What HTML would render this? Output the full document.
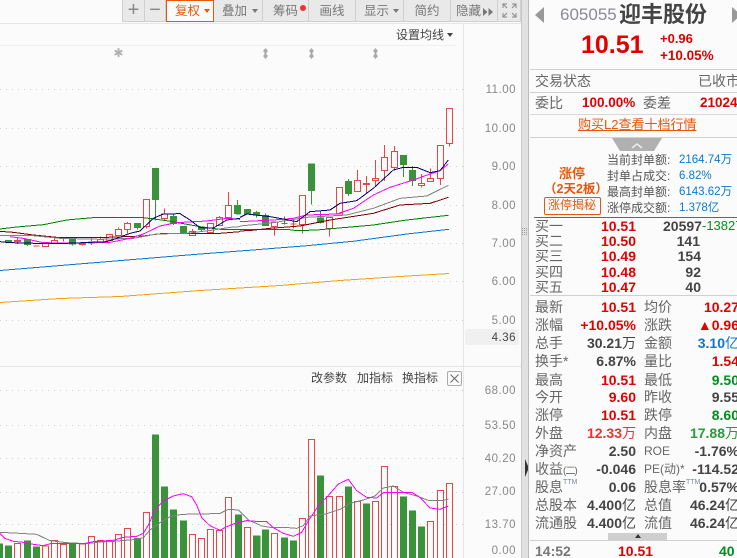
<!DOCTYPE html>
<html><head><meta charset="utf-8">
<style>
html,body{margin:0;padding:0;width:737px;height:558px;overflow:hidden;background:#fbfbfb}
body{position:relative;font-family:"Liberation Sans","WenQuanYi Zen Hei","Noto Sans CJK SC",sans-serif;color:#555}
.a{position:absolute}
.t{position:absolute;white-space:nowrap;line-height:14px;font-size:14px}
.b{font-weight:bold}
.r{color:#e00000}.g{color:#008f1f}.d{color:#444}.bl{color:#0a78d0}.o{color:#e8560a}
.l{color:#666}
.n{font-weight:normal}
.ax{position:absolute;white-space:nowrap;font-size:11.5px;line-height:12px;color:#888;letter-spacing:.5px;right:221px}
.tb{position:absolute;top:0;height:21px;background:#e9e9e9;border-right:1px solid #cfcfcf;border-bottom:1px solid #cfcfcf;font-size:12.5px;line-height:23px;text-align:center;color:#777;box-sizing:content-box}
.s{position:absolute;white-space:nowrap;font-size:12px;line-height:12px;color:#555}
.v{position:absolute;white-space:nowrap;font-size:11.5px;line-height:12px;color:#0a78d0;left:679px}
.R{right:101px}
.R2{right:-2px}
polyline{shape-rendering:crispEdges}
</style></head><body>

<!-- toolbar -->
<div class="a" style="left:122px;top:0;width:1px;height:22px;background:#cfcfcf"></div>
<div class="tb" style="left:123px;width:21px;font-size:20px;line-height:20px;color:#888">+</div>
<div class="tb" style="left:145px;width:20px;font-size:20px;line-height:20px;color:#888">−</div>
<div class="tb" style="left:166px;width:46px;height:20px;background:#fafafa;border:1px solid #e8560a;color:#e8560a;text-align:left;text-indent:8px;line-height:21px">复权</div>
<div class="a" style="left:204px;top:9px;border:3.5px solid transparent;border-top:4px solid #e8560a;border-bottom:0"></div>
<div class="tb" style="left:214px;width:48px;text-align:left;text-indent:8px">叠加</div>
<div class="a" style="left:252px;top:9px;border:3.5px solid transparent;border-top:4px solid #777;border-bottom:0"></div>
<div class="tb" style="left:263px;width:45px;text-align:left;text-indent:10px">筹码</div>
<div class="a" style="left:300px;top:5px;width:6px;height:6px;border-radius:3px;background:#f03030"></div>
<div class="tb" style="left:309px;width:46px">画线</div>
<div class="tb" style="left:356px;width:47px;text-align:left;text-indent:8px">显示</div>
<div class="a" style="left:393px;top:9px;border:3.5px solid transparent;border-top:4px solid #777;border-bottom:0"></div>
<div class="tb" style="left:404px;width:46px">简约</div>
<div class="tb" style="left:451px;width:46px;text-align:left;text-indent:5px">隐藏</div>
<svg class="a" style="left:483px;top:8px" width="12" height="8"><path d="M0 0l4.500 4-4.500 4zM5.500 0l4.500 4-4.500 4z" fill="#777"/></svg>
<div class="tb" style="left:498px;width:22px"></div>
<svg class="a" style="left:502px;top:3px" width="15" height="15" fill="none" stroke="#888"><path d="M1 5V1h4M14 5V1h-4M1 10v4h4M14 10v4h-4M1 1l4 4M14 1l-4 4M1 14l4-4M14 14l-4-4"/></svg>
<div class="a" style="left:0;top:23px;width:522px;height:1px;background:#e6e6e6"></div>
<div class="a" style="left:0;top:45px;width:457px;height:1px;background:#f0f0f0"></div>

<!-- chart frame -->
<div class="a" style="left:463px;top:24px;width:1px;height:534px;background:#e4e4e4"></div>
<div class="a" style="left:0;top:366px;width:522px;height:1px;background:#e4e4e4"></div>
<div class="a" style="left:521px;top:0;width:8px;height:558px;background:#e2e2e2;border-left:1px solid #c8c8c8;border-right:1px solid #bbb;box-sizing:border-box"></div>
<svg class="a" style="left:522px;top:226px" width="6" height="12"><path d="M0.500 2v8M2.500 2v8M4.500 2v8" stroke="#999" stroke-dasharray="1 1"/></svg>
<svg class="a" style="left:524px;top:459px" width="5" height="18"><path d="M1 0L4 7V11L1 18z" fill="#333"/></svg>

<div class="t" style="left:396px;top:28px;font-size:12px;color:#444">设置均线</div>
<div class="a" style="left:447px;top:33px;border:3px solid transparent;border-top:4px solid #444;border-bottom:0"></div>

<svg class="a" style="left:0;top:0" width="464" height="558">
<g stroke="#cfcfcf" stroke-dasharray="1 5" fill="none">
<path d="M0 89.500H463M0 128.500H463M0 166.500H463M0 205.500H463M0 243.500H463M0 281.500H463M0 320.500H463M0 390.500H463M0 425.500H463M0 458.500H463M0 492.500H463M0 524.500H463"/>
</g>
<g fill="#b0b0b0" font-size="12" font-family="Liberation Sans">
<text x="113.500" y="57">✱</text>
</g>
<path d="M265.500 48l2.500 3-1.500 1.500v2l1.500 1.500-2.500 3-2.500-3 1.500-1.500v-2l-1.500-1.500zM311.500 48l2.500 3-1.500 1.500v2l1.500 1.500-2.500 3-2.500-3 1.500-1.500v-2l-1.500-1.500zM375.500 48l2.500 3-1.500 1.500v2l1.500 1.500-2.500 3-2.500-3 1.500-1.500v-2l-1.500-1.500z" fill="#aaa"/>

<!-- candles left: zoom coords 0,130 -->
<g transform="translate(0,130) scale(.33333)" shape-rendering="crispEdges" stroke-width="3">
<path fill="#3a923a" stroke="#3a923a" d="M16 331h18v7h-18zM73 329h18v15h-18zM82 344V348M181 322h18v4h-18zM190 326V335M208 328h18v14h-18zM217 342V347M403 280h18v13h-18zM412 293V298M457 115h19v94h-19zM466 209V272M511 259h18v21h-18zM520 253V285M541 289h18v21h-18zM595 293h18v6h-18zM604 299V303M703 226h18v25h-18zM712 210V226"/>
<path fill="#fbfbfb" stroke="#e84545" d="M43 331h18v4h-18zM52 322V331M52 335V342M100 348h18M127 340h18v9h-18zM154 331h18v10h-18zM163 320V331M238 340h18v3h-18zM247 336V346M265 336h18v3h-18zM274 322V336M274 339V345M292 328h18v10h-18zM301 319V328M319 314h18v18h-18zM346 298h18v18h-18zM355 292V298M373 280h18v18h-18zM382 276V280M382 298V310M430 208h18v82h-18zM439 290V296M484 252h18v13h-18zM493 235V252M493 265V270M568 305h18v11h-18zM577 297V305M622 280h18v27h-18zM649 263h18v24h-18zM658 258V263M676 226h18v37h-18zM685 186V226"/>
</g>

<!-- candles right: zoom coords 240,100 -->
<g transform="translate(240,100) scale(.33333)" shape-rendering="crispEdges" stroke-width="3">
<path fill="#3a923a" stroke="#3a923a" d="M-10 316h10v26h-10zM13 328h18v14h-18zM40 337h18v6h-18zM49 333V352M67 347h18v30h-18zM76 341V347M124 371h18M133 350V373M205 192h19v80h-19zM214 272V314M232 354h18v13h-18zM241 332V370M316 244h19v37h-19zM325 237V288M481 166h19v28h-19zM490 194V231M508 211h19v30h-19zM517 198V258"/>
<path fill="#fbfbfb" stroke="#e84545" d="M94 366h18v14h-18zM103 380V406M90 384h14M151 372h18M160 358V385M178 286h18v88h-18zM187 374V401M259 352h18v34h-18zM268 386V410M289 262h18v80h-18zM343 241h18v33h-18zM352 210V241M370 250h18v4h-18zM379 228V250M379 254V282M397 235h18v7h-18zM406 180V235M406 242V258M424 172h18v39h-18zM433 135V172M433 211V243M454 154h18v49h-18zM463 138V154M463 203V212M535 250h18v7h-18zM544 222V250M544 257V262M562 235h18v9h-18zM571 205V235M592 136h18v100h-18zM601 236V255M619 25h18v105h-18zM628 130V140"/>
</g>

<!-- MA lines -->
<g fill="none" stroke-width="1">
<polyline stroke="#f0a010" points="0,302.500 60,298.500 120,296.500 200,290.500 280,285.500 340,280.500 400,276.500 449,273.500"/>
<polyline stroke="#0878cc" points="0,270.500 132,259.600 200,254 240,251 307,245.700 353,241.300 407,234 449,229.300"/>
</g>
<g transform="translate(0,130) scale(.33333)" fill="none" stroke-width="3">
<polyline stroke="#008000" points="0,297 50,291 130,284 200,270 290,262 430,263 500,272 600,290 660,298 720,298"/>
<polyline stroke="#800000" points="0,304 40,307 100,315 180,323 320,322 430,318 490,310 660,310 720,305"/>
<polyline stroke="#808080" points="0,316 100,317 180,325 300,328 400,325 470,312 560,310 640,300 690,292 720,290"/>
<polyline stroke="#ff00ff" points="30,320 70,325 130,338 200,339 330,337 390,325 430,312 480,288 530,278 620,273 680,265 720,268"/>
<polyline stroke="#000080" points="0,335 30,338 80,339 130,341 200,340 320,335 350,325 390,310 420,303 460,265 490,252 540,251 570,270 600,293 640,294 680,270 720,265"/>
</g>
<g transform="translate(240,100) scale(.33333)" fill="none" stroke-width="3">
<polyline stroke="#008000" points="0,388 140,388 170,392 230,390 400,375 500,360 625,346"/>
<polyline stroke="#800000" points="0,393 35,391 90,385 180,378 270,360 400,340 480,315 570,310 625,292"/>
<polyline stroke="#808080" points="0,378 100,368 200,352 320,345 400,325 480,295 560,288 625,256"/>
<polyline stroke="#ff00ff" points="0,365 100,360 160,355 200,345 290,342 340,325 400,285 450,262 520,240 570,222 600,212 625,192"/>
<polyline stroke="#000080" points="0,352 20,342 90,350 130,357 170,365 210,335 270,330 300,310 350,302 400,265 460,210 490,202 530,202 570,218 600,212 625,180"/>
</g>

<!-- volume left -->
<g transform="translate(0,425) scale(.33333)" shape-rendering="crispEdges" stroke-width="3">
<path fill="#3a923a" stroke="#3a923a" d="M-10 357h18v41h-18zM16 363h18v35h-18zM73 348h18v50h-18zM100 366h18v32h-18zM208 356h18v42h-18zM403 340h18v58h-18zM457 30h19v368h-19zM484 186h19v212h-19zM511 255h19v143h-19zM541 288h19v110h-19zM706 270h19v128h-19zM760 333h20v65h-20z"/>
<path fill="#fbfbfb" stroke="#e84545" d="M43 355h18v45h-18zM127 363h18v37h-18zM154 347h18v53h-18zM181 358h18v42h-18zM238 357h18v43h-18zM265 334h18v66h-18zM292 346h18v54h-18zM319 346h18v54h-18zM346 328h18v72h-18zM373 310h18v90h-18zM430 262h18v138h-18zM568 328h18v72h-18zM595 340h18v60h-18zM622 313h18v87h-18zM649 316h18v84h-18zM676 217h18v183h-18zM733 307h18v93h-18z"/>
</g>
<!-- volume right -->
<g transform="translate(260,360) scale(.33333)" shape-rendering="crispEdges" stroke-width="3">
<path fill="#3a923a" stroke="#3a923a" d="M7 510h19v84h-19zM64 534h18v60h-18zM91 543h18v51h-18zM172 348h19v246h-19zM256 381h19v213h-19zM310 432h19v162h-19zM421 411h19v183h-19zM448 453h19v141h-19zM475 501h19v93h-19z"/>
<path fill="#fbfbfb" stroke="#e84545" d="M34 520h18v76h-18zM118 475h18v121h-18zM145 238h18v358h-18zM199 409h18v187h-18zM229 409h18v187h-18zM283 424h18v172h-18zM337 424h18v172h-18zM364 319h18v277h-18zM394 379h18v217h-18zM502 484h18v112h-18zM532 391h18v205h-18zM559 370h18v226h-18z"/>
</g>
<g transform="translate(0,425) scale(.33333)" fill="none" stroke-width="3">
<polyline stroke="#808080" points="0,322 60,325 110,328 150,347 200,353 260,356 300,351 340,349 400,344 430,338 450,315 480,293 510,275 545,268 610,267 660,265 685,253 715,255 745,285 780,300"/>
<polyline stroke="#ff00ff" points="0,325 15,340 40,349 70,352 100,358 130,362 155,355 190,356 250,356 280,350 340,346 370,337 410,334 430,325 445,300 465,255 490,228 520,213 550,206 575,215 590,240 605,278 630,302 660,316 680,305 700,297 740,287 780,290"/>
</g>
<g transform="translate(260,360) scale(.33333)" fill="none" stroke-width="3">
<polyline stroke="#808080" points="0,497 30,502 85,503 110,505 130,497 150,468 200,461 240,448 270,430 310,420 345,408 370,384 400,378 430,397 470,408 505,421 550,421 565,417"/>
<polyline stroke="#ff00ff" points="0,484 20,485 40,503 70,520 100,529 125,517 150,475 180,430 200,412 235,372 265,358 290,392 320,412 350,414 370,398 410,397 455,397 480,412 510,444 540,448 565,438"/>
</g>
</svg>

<div class="a" style="left:465px;top:329px;width:54px;height:16px;background:#f0f0f0;border-radius:3px"></div>
<div class="ax" style="top:84px">11.00</div>
<div class="ax" style="top:123px">10.00</div>
<div class="ax" style="top:161px">9.00</div>
<div class="ax" style="top:200px">8.00</div>
<div class="ax" style="top:238px">7.00</div>
<div class="ax" style="top:276px">6.00</div>
<div class="ax" style="top:315px">5.00</div>
<div class="ax" style="top:332px;color:#444">4.36</div>
<div class="ax" style="top:385px">68.00</div>
<div class="ax" style="top:420px">53.50</div>
<div class="ax" style="top:453px">40.20</div>
<div class="ax" style="top:486px">27.00</div>
<div class="ax" style="top:519px">13.70</div>
<div class="ax" style="top:545px">0.00</div>

<div class="t" style="left:311px;top:371px;font-size:12px;color:#444">改参数</div>
<div class="t" style="left:357px;top:371px;font-size:12px;color:#444">加指标</div>
<div class="t" style="left:402px;top:371px;font-size:12px;color:#444">换指标</div>
<svg class="a" style="left:447px;top:371px" width="15" height="15" fill="none"><rect x=".5" y=".5" width="14" height="14" rx="1.500" stroke="#aaa"/><path d="M3.500 3.500l8 8M11.500 3.500l-8 8" stroke="#666"/></svg>

<!-- right panel -->
<svg class="a" style="left:535px;top:7px" width="10" height="16"><path d="M9 0V16L0 8z" fill="#999"/></svg>
<svg class="a" style="left:732px;top:7px" width="10" height="16"><path d="M0 0V16L9 8z" fill="#999"/></svg>
<div class="t" style="left:560px;top:6px;font-size:17px;line-height:18px;color:#8a8a96">605055</div>
<div class="t b" style="left:619px;top:2px;font-size:22px;line-height:26px;color:#444;letter-spacing:0">迎丰股份</div>
<div class="t b r" style="left:581px;top:31px;font-size:25px;line-height:28px">10.51</div>
<div class="t b r" style="left:660px;top:32px;font-size:13px">+0.96</div>
<div class="t b r" style="left:660px;top:49px;font-size:13.500px">+10.05%</div>
<div class="a" style="left:530px;top:69px;width:207px;height:1px;background:#d0d0d0"></div>
<div class="t l" style="left:535px;top:74px">交易状态</div>
<div class="t l" style="left:698px;top:74px">已收市</div>
<div class="a" style="left:530px;top:92px;width:207px;height:1px;background:#d0d0d0"></div>
<div class="t l" style="left:535px;top:96px">委比</div>
<div class="t b r" style="left:582px;top:96px;font-size:13.500px">100.00%</div>
<div class="t l" style="left:643px;top:96px">委差</div>
<div class="t b r" style="left:700px;top:96px;font-size:13.500px">21024</div>
<div class="a" style="left:530px;top:114px;width:207px;height:1px;background:#d8d8d8"></div>
<div class="t o" style="left:578px;top:118px;font-size:13px;text-decoration:underline">购买L2查看十档行情</div>
<div class="a" style="left:530px;top:137px;width:207px;height:1px;background:#d0d0d0"></div>
<svg class="a" style="left:612px;top:138px" width="50" height="14"><path d="M0 0H50L42 13H8z" fill="#b0b0b0"/><path d="M20 10l5-4 5 4" fill="none" stroke="#eee" stroke-width="1.500"/></svg>

<div class="t b o" style="left:559px;top:167px;font-size:13px">涨停</div>
<div class="t b o" style="left:544px;top:182px;font-size:12.500px">（2天2板）</div>
<div class="a" style="left:544px;top:197px;width:55px;height:16px;border:1px solid #e8560a;border-radius:2px"></div>
<div class="t o" style="left:548px;top:198px;font-size:12px">涨停揭秘</div>
<div class="s" style="left:607px;top:154px">当前封单额:</div><div class="v" style="top:154px">2164.74万</div>
<div class="s" style="left:607px;top:170px">封单占成交:</div><div class="v" style="top:170px">6.82%</div>
<div class="s" style="left:607px;top:186px">最高封单额:</div><div class="v" style="top:186px">6143.62万</div>
<div class="s" style="left:607px;top:202px">涨停成交额:</div><div class="v" style="top:202px">1.378亿</div>
<div class="a" style="left:534px;top:217px;width:203px;height:1px;background:#666"></div>

<div class="t l" style="left:535px;top:219px">买一</div><div class="t b r R" style="top:219px">10.51</div>
<div class="t b d" style="left:663px;top:219px">20597</div><div class="t g n" style="left:702px;top:219px;font-size:13px">-13827</div>
<div class="t l" style="left:535px;top:234px">买二</div><div class="t b r R" style="top:234px">10.50</div><div class="t b d" style="right:37px;top:234px">141</div>
<div class="t l" style="left:535px;top:249px">买三</div><div class="t b r R" style="top:249px">10.49</div><div class="t b d" style="right:36px;top:249px">154</div>
<div class="t l" style="left:535px;top:265px">买四</div><div class="t b r R" style="top:265px">10.48</div><div class="t b d" style="right:36px;top:265px">92</div>
<div class="t l" style="left:535px;top:280px">买五</div><div class="t b r R" style="top:280px">10.47</div><div class="t b d" style="right:36px;top:280px">40</div>
<div class="a" style="left:530px;top:295px;width:207px;height:1px;background:#d0d0d0"></div>

<div class="t l" style="left:535px;top:300px">最新</div><div class="t b r R" style="top:300px">10.51</div><div class="t l" style="left:644px;top:300px">均价</div><div class="t b r R2" style="top:300px">10.27</div>
<div class="t l" style="left:535px;top:318px">涨幅</div><div class="t b r R" style="top:318px">+10.05%</div><div class="t l" style="left:644px;top:318px">涨跌</div><div class="t b r R2" style="top:318px">▲0.96</div>
<div class="t l" style="left:535px;top:336px">总手</div><div class="t b d R" style="top:336px">30.21<span class="n">万</span></div><div class="t l" style="left:644px;top:336px">金额</div><div class="t b bl R2" style="top:336px">3.10<span class="n">亿</span></div>
<div class="t l" style="left:535px;top:354px">换手*</div><div class="t b d R" style="top:354px">6.87%</div><div class="t l" style="left:644px;top:354px">量比</div><div class="t b r R2" style="top:354px">1.54</div>
<div class="t l" style="left:535px;top:373px">最高</div><div class="t b r R" style="top:373px">10.51</div><div class="t l" style="left:644px;top:373px">最低</div><div class="t b g R2" style="top:373px">9.50</div>
<div class="t l" style="left:535px;top:390px">今开</div><div class="t b r R" style="top:390px">9.60</div><div class="t l" style="left:644px;top:390px">昨收</div><div class="t b d R2" style="top:390px">9.55</div>
<div class="t l" style="left:535px;top:408px">涨停</div><div class="t b r R" style="top:408px">10.51</div><div class="t l" style="left:644px;top:408px">跌停</div><div class="t b g R2" style="top:408px">8.60</div>
<div class="t l" style="left:535px;top:426px">外盘</div><div class="t b R" style="top:426px;color:#f03030">12.33<span class="n">万</span></div><div class="t l" style="left:644px;top:426px">内盘</div><div class="t b R2" style="top:426px;color:#2a9a3a">17.88<span class="n">万</span></div>
<div class="t l" style="left:535px;top:444px">净资产</div><div class="t b d R" style="top:444px">2.50</div><div class="t l" style="left:644px;top:444px;font-size:12px">ROE</div><div class="t b d R2" style="top:444px">-1.76%</div>
<div class="t l" style="left:535px;top:462px">收益<span style="font-size:10px;letter-spacing:-1px">(二)</span></div><div class="t b d R" style="top:462px">-0.046</div><div class="t l" style="left:644px;top:462px;font-size:12px">PE(动)*</div><div class="t b d R2" style="top:462px">-114.52</div>
<div class="t l" style="left:535px;top:480px">股息</div><div class="a" style="left:563px;top:479px;font-size:7px;line-height:7px;color:#7a8a9a">TTM</div><div class="t b d R" style="top:480px">0.06</div><div class="t l" style="left:644px;top:480px">股息率</div><div class="a" style="left:686px;top:479px;font-size:7px;line-height:7px;color:#7a8a9a">TTM</div><div class="t b d R2" style="top:480px">0.57%</div>
<div class="t l" style="left:535px;top:498px">总股本</div><div class="t b d R" style="top:498px">4.400<span class="n">亿</span></div><div class="t l" style="left:644px;top:498px">总值</div><div class="t b d R2" style="top:498px">46.24<span class="n">亿</span></div>
<div class="t l" style="left:535px;top:516px">流通股</div><div class="t b d R" style="top:516px">4.400<span class="n">亿</span></div><div class="t l" style="left:644px;top:516px">流值</div><div class="t b d R2" style="top:516px">46.24<span class="n">亿</span></div>

<div class="a" style="left:608px;top:533px;width:59px;height:7px;background:#cfcfcf"></div>
<div class="a" style="left:635px;top:534px;border:3px solid transparent;border-bottom:4px solid #333;border-top:0"></div>
<div class="a" style="left:530px;top:540px;width:207px;height:1px;background:#d0d0d0"></div>
<div class="t b" style="left:535px;top:544px;color:#777">14:52</div>
<div class="t b r" style="left:618px;top:544px">10.51</div>
<div class="t b g" style="left:719px;top:544px">40</div>
</body></html>
